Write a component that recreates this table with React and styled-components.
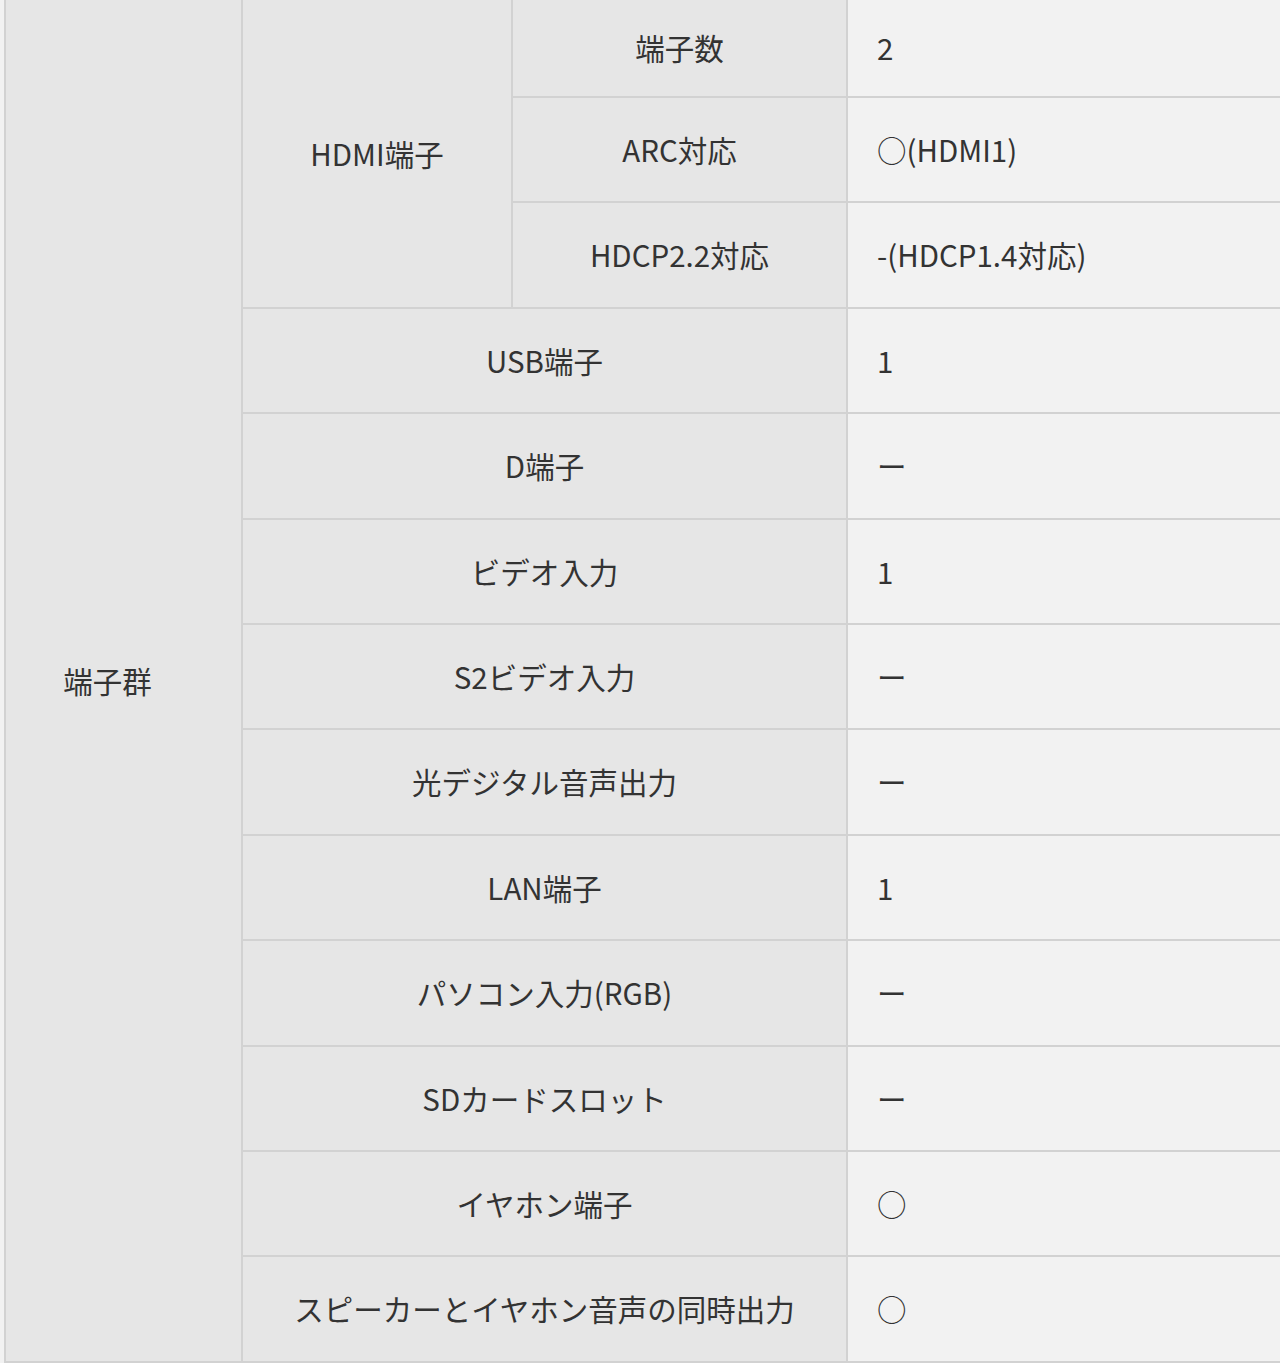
import React from 'react';
import styled, { createGlobalStyle } from 'styled-components';

const GlobalStyle = createGlobalStyle`
  html, body {
    margin: 0;
    padding: 0;
    background: #f2f2f2;
  }
  body {
    font-family: "Noto Sans CJK JP", "Noto Sans", sans-serif;
    color: #333;
  }
`;

const Page = styled.div`
  padding-left: 4px;
  width: 1276px;
  overflow: hidden;
`;

const SpecTable = styled.table`
  width: 1276px;
  table-layout: fixed;
  border-collapse: collapse;
  font-size: 29.5px;
  line-height: 1.4;
  border-left: 1px solid #d6d6d6;
`;

const Row = styled.tr`
  height: ${(p) => (p.$short ? '97px' : '105.4px')};
`;

const Head = styled.th`
  background: #e6e6e6;
  font-weight: 400;
  text-align: center;
  vertical-align: middle;
  padding: ${(p) => (p.$group ? '0 32px 0 0' : '0 6px')};
  border: 2px solid #d2d2d2;
  border-top: ${(p) => (p.$top ? 'none' : '2px solid #d2d2d2')};
  white-space: nowrap;
`;

const Value = styled.td`
  background: #f2f2f2;
  text-align: left;
  vertical-align: middle;
  padding: 0 0 0 29px;
  border: 2px solid #d2d2d2;
  border-right: none;
  border-top: ${(p) => (p.$top ? 'none' : '2px solid #d2d2d2')};
`;

const rows = [
  { label: 'USB端子', value: '1' },
  { label: 'D端子', value: 'ー' },
  { label: 'ビデオ入力', value: '1' },
  { label: 'S2ビデオ入力', value: 'ー' },
  { label: '光デジタル音声出力', value: 'ー' },
  { label: 'LAN端子', value: '1' },
  { label: 'パソコン入力(RGB)', value: 'ー' },
  { label: 'SDカードスロット', value: 'ー' },
  { label: 'イヤホン端子', value: '○' },
  { label: 'スピーカーとイヤホン音声の同時出力', value: '○' },
];

const App = () => (
  <Page>
    <GlobalStyle />
    <SpecTable>
      <colgroup>
        <col style={{ width: 237 }} />
        <col style={{ width: 270 }} />
        <col style={{ width: 335 }} />
        <col style={{ width: 434 }} />
      </colgroup>
      <tbody>
        <Row $short>
          <Head $top $group rowSpan={13}>端子群</Head>
          <Head $top rowSpan={3}>HDMI端子</Head>
          <Head $top>端子数</Head>
          <Value $top>2</Value>
        </Row>
        <Row>
          <Head>ARC対応</Head>
          <Value>○(HDMI1)</Value>
        </Row>
        <Row>
          <Head>HDCP2.2対応</Head>
          <Value>-(HDCP1.4対応)</Value>
        </Row>
        {rows.map((r) => (
          <Row key={r.label}>
            <Head colSpan={2}>{r.label}</Head>
            <Value>{r.value}</Value>
          </Row>
        ))}
      </tbody>
    </SpecTable>
  </Page>
);

export default App;
